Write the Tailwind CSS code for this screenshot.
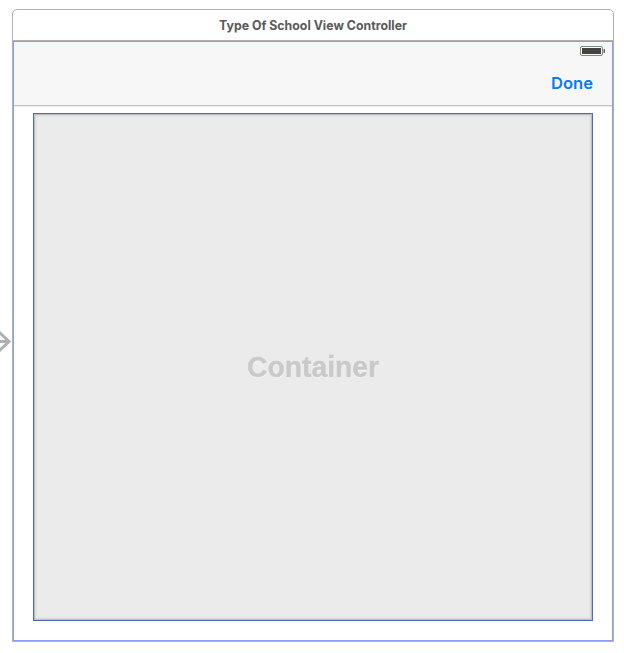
<!DOCTYPE html>
<html lang="en">
<head>
<meta charset="utf-8">
<title>Type Of School View Controller</title>
<script src="https://cdn.jsdelivr.net/npm/@tailwindcss/browser@4"></script>
</head>
<body class="relative h-[653px] w-[624px] overflow-hidden bg-white pt-[9px] pl-3 font-['Liberation_Sans',Arial,sans-serif]">
  <!-- initial scene arrow -->
  <svg class="absolute left-0 top-[329px]" width="12" height="25" viewBox="0 0 12 25" fill="none" stroke="#b0b0b0" stroke-width="3"><path d="M-2 12.5H9M-1 3L9 12.5L-1 22"/></svg>
  <main class="flex h-[633px] w-[602px] flex-col rounded-t-[5px] border border-[#b1b1b1] bg-white">
    <header class="flex h-[31px] shrink-0 items-center justify-center border-b border-[#b1b1b1]">
      <svg width="220" height="28" viewBox="0 0 220 28"><text x="16" y="18.5" textLength="188" lengthAdjust="spacingAndGlyphs" font-family="Inter, sans-serif" font-size="12.5" font-weight="700" fill="#5a5a5a">Type Of School View Controller</text></svg>
    </header>
    <section class="flex h-[600px] flex-col border border-[#8c9cf2]">
      <nav class="flex h-16 shrink-0 flex-col items-end border-b border-[#c3c3c3] bg-[#f7f7f7]">
        <svg class="mt-1 mr-[7px] shrink-0" width="25" height="10" viewBox="0 0 25 10"><rect x=".5" y=".5" width="22" height="9" rx="1.5" fill="#fff" stroke="#858785"/><rect x="2" y="2" width="19" height="6" fill="#434541"/><path d="M24 3C25 3.5 25 6.500 24 7Z" fill="#555" stroke="#555" stroke-width=".8"/></svg>
        <svg class="mt-[17px] mr-[18px]" width="44" height="24" viewBox="0 0 44 24"><text x="1" y="16" textLength="42" lengthAdjust="spacingAndGlyphs" font-family="Inter, sans-serif" font-size="16.5" font-weight="600" fill="#087bf8">Done</text></svg>
      </nav>
      <div class="flex grow flex-col border-t border-[#ececec] px-[19px] pt-[6px] pb-[19px]">
        <div class="flex grow items-center justify-center border border-[#5066c4] bg-[#ebebeb] shadow-[inset_0_0_0_1px_#bdbdbd,inset_0_0_3px_1px_#c4c4c4]">
          <svg width="160" height="48" viewBox="0 0 160 48"><text x="14" y="34" textLength="132" lengthAdjust="spacingAndGlyphs" font-family="Liberation Sans, Arial, sans-serif" font-size="29" font-weight="700" fill="#c9c9c9" stroke="#c9c9c9" stroke-width=".4" class="drop-shadow-[0_1px_0_#f5f5f5]">Container</text></svg>
        </div>
      </div>
    </section>
  </main>
</body>
</html>
